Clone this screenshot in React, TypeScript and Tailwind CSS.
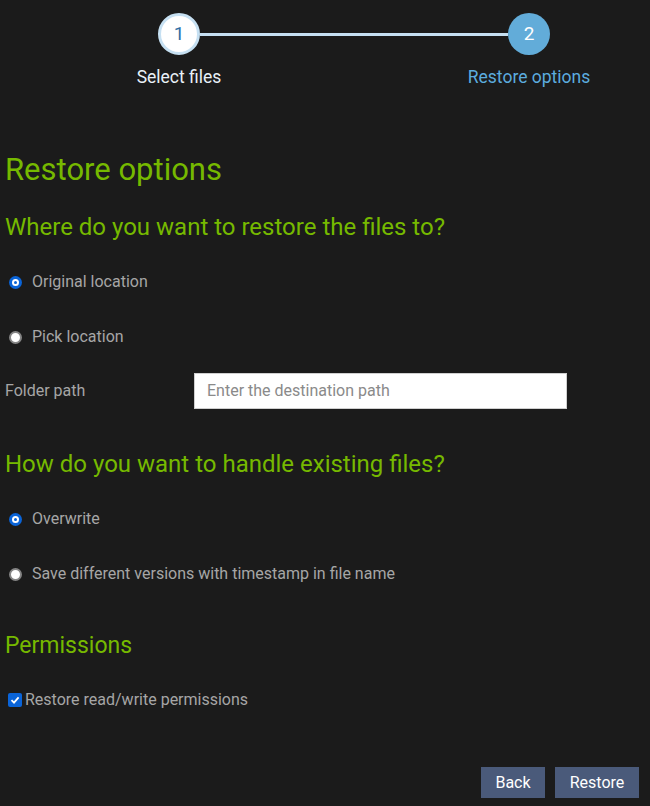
import React from "react";

function Radio({ checked, label }: { checked: boolean; label: string }) {
  return (
    <label className="flex items-center h-[20px]">
      {checked ? (
        <span className="ml-[4px] w-[13px] h-[13px] rounded-full bg-[#0a64d8] flex items-center justify-center">
          <span className="w-[7px] h-[7px] rounded-full bg-white flex items-center justify-center">
            <span className="w-[3px] h-[3px] rounded-full bg-[#0a64d8]" />
          </span>
        </span>
      ) : (
        <span className="ml-[4px] w-[13px] h-[13px] rounded-full bg-white border-2 border-[#858585]" />
      )}
      <span className="ml-[10px] text-[16px] text-[#a6a6a6]">{label}</span>
    </label>
  );
}

export default function App() {
  const font = { fontFamily: "Roboto, 'Noto Sans', sans-serif" };
  return (
    <div className="w-[650px] h-[806px] bg-[#1b1b1b] overflow-hidden" style={font}>
      {/* Stepper */}
      <div className="pt-[13px]">
        <div className="flex items-center pl-[158px]">
          <div className="w-[42px] h-[42px] rounded-full bg-white border-[3px] border-[#c6e0f2] flex items-center justify-center text-[19px] text-[#2f6fa6]">
            1
          </div>
          <div className="w-[308px] h-[3px] bg-[#c6e0f2]" />
          <div className="w-[42px] h-[42px] rounded-full bg-[#62acd9] flex items-center justify-center text-[19px] text-white">
            2
          </div>
        </div>
        <div className="flex mt-[12px] text-[17.5px] leading-[20px]">
          <div className="ml-[89px] w-[180px] text-center text-[#e9f1f8]">Select files</div>
          <div className="ml-[170px] w-[180px] text-center text-[#5cacdf]">Restore options</div>
        </div>
      </div>

      <div className="px-[5px]">
        <h1 className="mt-[65px] text-[31px] leading-[36px] text-[#76b900] font-normal">Restore options</h1>
        <h2 className="mt-[24px] text-[24px] leading-[30px] text-[#76b900]">Where do you want to restore the files to?</h2>

        <div className="mt-[30px] flex flex-col gap-[35px]">
          <Radio checked label="Original location" />
          <Radio checked={false} label="Pick location" />
        </div>

        <div className="mt-[26px] flex items-center">
          <span className="w-[189px] text-[16px] text-[#a6a6a6]">Folder path</span>
          <div className="w-[373px] h-[36px] bg-white border border-[#cfcfcf] flex items-center pl-[12px] text-[16px] text-[#8a8a8a]">
            Enter the destination path
          </div>
        </div>

        <h2 className="mt-[40px] text-[24px] leading-[30px] text-[#76b900]">How do you want to handle existing files?</h2>

        <div className="mt-[30px] flex flex-col gap-[35px]">
          <Radio checked label="Overwrite" />
          <Radio checked={false} label="Save different versions with timestamp in file name" />
        </div>

        <h2 className="mt-[47px] text-[23px] leading-[30px] text-[#76b900]">Permissions</h2>

        <label className="mt-[29px] flex items-center h-[20px]">
          <span className="ml-[3px] w-[14px] h-[14px] rounded-[2px] bg-[#0a64d8] flex items-center justify-center">
            <svg width="10" height="10" viewBox="0 0 10 10">
              <path d="M1.5 5.2 L4 7.6 L8.6 2.4" stroke="white" strokeWidth="1.8" fill="none" />
            </svg>
          </span>
          <span className="ml-[3px] text-[16px] text-[#a6a6a6]">Restore read/write permissions</span>
        </label>

        <div className="mt-[57px] flex justify-end gap-[10px] pr-[6px]">
          <button className="w-[64px] h-[31px] bg-[#4a5a7a] text-white text-[16px]">Back</button>
          <button className="w-[84px] h-[31px] bg-[#4a5a7a] text-white text-[16px]">Restore</button>
        </div>
      </div>
    </div>
  );
}
